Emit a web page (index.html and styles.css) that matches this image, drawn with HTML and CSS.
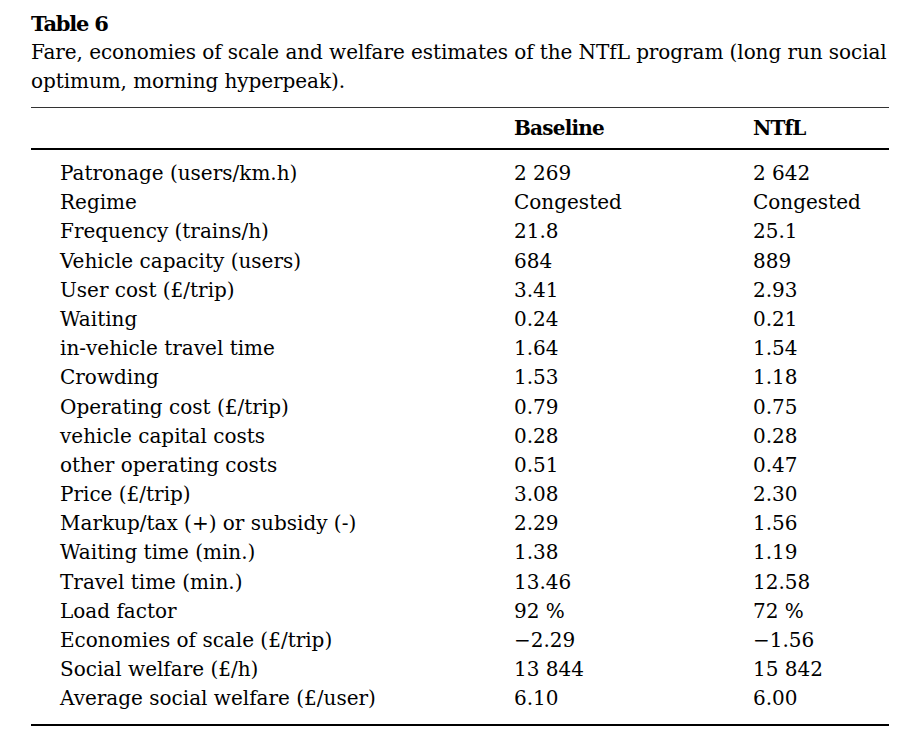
FILE: index.html
```html
<!DOCTYPE html>
<html>
<head>
<meta charset="utf-8">
<link rel="stylesheet" href="styles.css">
</head>
<body>
<div class="page">
  <div class="title">Table 6</div>
  <div class="caption">Fare, economies of scale and welfare estimates of the NTfL program (long run social<br>optimum, morning hyperpeak).</div>
  <div class="table">
    <div class="row head"><span class="c1"></span><span class="c2">Baseline</span><span class="c3">NTfL</span></div>
    <div class="body">
      <div class="row"><span class="c1">Patronage (users/km.h)</span><span class="c2">2 269</span><span class="c3">2 642</span></div>
      <div class="row"><span class="c1">Regime</span><span class="c2">Congested</span><span class="c3">Congested</span></div>
      <div class="row"><span class="c1">Frequency (trains/h)</span><span class="c2">21.8</span><span class="c3">25.1</span></div>
      <div class="row"><span class="c1">Vehicle capacity (users)</span><span class="c2">684</span><span class="c3">889</span></div>
      <div class="row"><span class="c1">User cost (£/trip)</span><span class="c2">3.41</span><span class="c3">2.93</span></div>
      <div class="row"><span class="c1">Waiting</span><span class="c2">0.24</span><span class="c3">0.21</span></div>
      <div class="row"><span class="c1">in-vehicle travel time</span><span class="c2">1.64</span><span class="c3">1.54</span></div>
      <div class="row"><span class="c1">Crowding</span><span class="c2">1.53</span><span class="c3">1.18</span></div>
      <div class="row"><span class="c1">Operating cost (£/trip)</span><span class="c2">0.79</span><span class="c3">0.75</span></div>
      <div class="row"><span class="c1">vehicle capital costs</span><span class="c2">0.28</span><span class="c3">0.28</span></div>
      <div class="row"><span class="c1">other operating costs</span><span class="c2">0.51</span><span class="c3">0.47</span></div>
      <div class="row"><span class="c1">Price (£/trip)</span><span class="c2">3.08</span><span class="c3">2.30</span></div>
      <div class="row"><span class="c1">Markup/tax (+) or subsidy (-)</span><span class="c2">2.29</span><span class="c3">1.56</span></div>
      <div class="row"><span class="c1">Waiting time (min.)</span><span class="c2">1.38</span><span class="c3">1.19</span></div>
      <div class="row"><span class="c1">Travel time (min.)</span><span class="c2">13.46</span><span class="c3">12.58</span></div>
      <div class="row"><span class="c1">Load factor</span><span class="c2">92 %</span><span class="c3">72 %</span></div>
      <div class="row"><span class="c1">Economies of scale (£/trip)</span><span class="c2">&minus;2.29</span><span class="c3">&minus;1.56</span></div>
      <div class="row"><span class="c1">Social welfare (£/h)</span><span class="c2">13 844</span><span class="c3">15 842</span></div>
      <div class="row"><span class="c1">Average social welfare (£/user)</span><span class="c2">6.10</span><span class="c3">6.00</span></div>
    </div>
  </div>
</div>
</body>
</html>
```

FILE: styles.css
```css
html, body {
  margin: 0;
  padding: 0;
  background: #fff;
}
.page {
  width: 858px;
  margin-left: 31px;
  padding-top: 9px;
  font-family: "DejaVu Serif", serif;
  color: #000;
  font-size: 20px;
  line-height: 29px;
}
.title {
  font-weight: bold;
  font-size: 21px;
  line-height: 29px;
  letter-spacing: -1.2px;
}
.caption {
  line-height: 29px;
  white-space: nowrap;
  letter-spacing: -0.07px;
}
.table {
  margin-top: 11px;
  border-top: 1px solid #333;
  border-bottom: 2px solid #000;
}
.row {
  display: grid;
  grid-template-columns: 483px 239px 1fr;
  height: 29.2px;
  white-space: nowrap;
}
.c1 {
  padding-left: 29px;
}
.head {
  font-weight: bold;
  height: 40px;
  align-items: center;
  border-bottom: 2px solid #000;
  letter-spacing: -0.8px;
}
.body {
  padding-top: 9px;
  padding-bottom: 10px;
}
```
